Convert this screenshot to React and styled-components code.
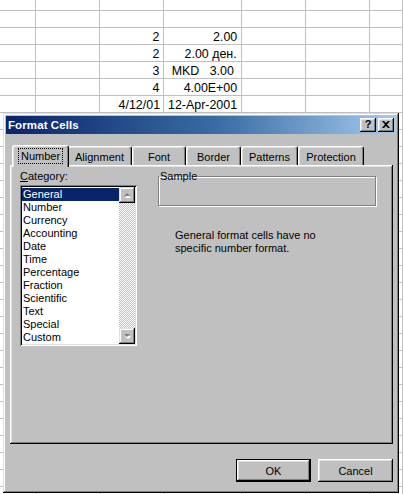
import React from "react";
import styled, { createGlobalStyle, css } from "styled-components";

const Global = createGlobalStyle`
  html, body { margin: 0; padding: 0; background: #fff; overflow: hidden; }
  body { width: 403px; height: 494px; font-family: "Liberation Sans", Arial, sans-serif; }
  * { box-sizing: border-box; }
`;

const Page = styled.div`
  position: relative;
  width: 403px;
  height: 494px;
  overflow: hidden;
`;

const Sheet = styled.div`
  display: grid;
  grid-template-columns: 36px 64px 64px 78px 64px 64px 1fr;
  grid-template-rows: 11px;
  grid-auto-rows: 17px;
`;

const Cell = styled.div`
  border-right: 1px solid #c0c0c0;
  border-bottom: 1px solid #c0c0c0;
  display: flex;
  align-items: flex-end;
  justify-content: flex-end;
  padding-right: ${(p) => p.$pr ?? 3}px;
  overflow: visible;
  white-space: pre;
`;

const CellText = styled.span`
  display: inline-block;
  font-family: "Liberation Sans", Arial, sans-serif;
  font-size: 13.5px;
  line-height: 15px;
  color: #000;
  transform: scaleX(0.92);
  transform-origin: right bottom;
`;

const Dialog = styled.div`
  position: absolute;
  left: 3px;
  top: 113px;
  width: 396px;
  height: 380px;
  background: #c0c0c0;
  padding: 3px;
  box-shadow: inset -1px -1px #000, inset 1px 1px #dfdfdf, inset -2px -2px #808080, inset 2px 2px #fff;
  display: flex;
  flex-direction: column;
  font-family: "Liberation Sans", Arial, sans-serif;
  font-size: 11px;
  color: #000;
`;

const TitleBar = styled.div`
  height: 18px;
  background: linear-gradient(to right, #0a246a, #3a6ea5 55%, #a6caf0);
  display: flex;
  align-items: center;
  padding: 0 2px 0 2px;
  flex: none;
`;

const Title = styled.div`
  flex: 1;
  color: #fff;
  font-weight: bold;
  font-size: 11.5px;
  letter-spacing: 0.1px;
`;

const CapButton = styled.div`
  width: 16px;
  height: 14px;
  background: #c0c0c0;
  box-shadow: inset -1px -1px #000, inset 1px 1px #fff, inset -2px -2px #808080, inset 2px 2px #dfdfdf;
  display: flex;
  align-items: center;
  justify-content: center;
  margin-left: ${(p) => p.$ml || 0}px;
  font-weight: bold;
  font-size: 11px;
  line-height: 11px;
  padding-bottom: 1px;
`;

const Body = styled.div`
  flex: 1;
  display: flex;
  flex-direction: column;
  padding: 10px 0 0 4px;
`;

const TabStrip = styled.div`
  display: flex;
  align-items: flex-end;
  height: 21px;
  padding-left: 4px;
  position: relative;
  z-index: 1;
`;

const Tab = styled.div`
  width: ${(p) => p.$w}px;
  height: 19px;
  background: #c0c0c0;
  border-top: 1px solid #fff;
  border-left: 1px solid #fff;
  border-right: 1px solid #000;
  border-radius: 3px 3px 0 0;
  box-shadow: inset -1px 0 #808080, inset 1px 1px #dfdfdf;
  display: flex;
  align-items: center;
  justify-content: center;
  padding-top: 1px;
  ${(p) =>
    p.$active &&
    css`
      height: 22px;
      margin: 0 -2px -2px;
      width: ${p.$w + 3}px;
      padding-bottom: 3px;
      position: relative;
      z-index: 2;
    `}
`;

const Focus = styled.span`
  outline: 1px dotted #000;
  outline-offset: 0px;
  padding: 1px 2px;
`;

const Panel = styled.div`
  width: 383px;
  height: 279px;
  background: #c0c0c0;
  box-shadow: inset -1px -1px #000, inset 1px 1px #fff, inset -2px -2px #808080, inset 2px 2px #dfdfdf;
  display: flex;
  padding: 5px 0 0 10px;
  gap: 21px;
`;

const LeftCol = styled.div`
  display: flex;
  flex-direction: column;
  width: 117px;
`;

const Label = styled.div`
  line-height: 13px;
  margin-bottom: 2px;
  u { text-decoration: underline; text-underline-offset: 1px; }
`;

const ListBox = styled.div`
  width: 117px;
  height: 161px;
  background: #fff;
  padding: 2px;
  box-shadow: inset 1px 1px #808080, inset -1px -1px #fff, inset 2px 2px #000, inset -2px -2px #dfdfdf;
  display: flex;
`;

const Items = styled.div`
  flex: 1;
  padding-top: 1px;
  overflow: hidden;
`;

const Item = styled.div`
  height: 13px;
  line-height: 13px;
  padding-left: 1px;
  white-space: nowrap;
  ${(p) =>
    p.$sel &&
    css`
      background: #0a246a;
      color: #fff;
    `}
`;

const ScrollBar = styled.div`
  width: 16px;
  display: flex;
  flex-direction: column;
  background: repeating-conic-gradient(#c0c0c0 0 25%, #fff 0 50%) 0 0 / 2px 2px;
`;

const Track = styled.div`
  flex: 1;
`;

const ArrowBtn = styled.div`
  width: 16px;
  height: 16px;
  background: #c0c0c0;
  box-shadow: inset -1px -1px #000, inset 1px 1px #dfdfdf, inset -2px -2px #808080, inset 2px 2px #fff;
  display: flex;
  align-items: center;
  justify-content: center;
`;

const RightCol = styled.div`
  display: flex;
  flex-direction: column;
  width: 218px;
`;

const Group = styled.fieldset`
  margin: 0;
  padding: 0;
  min-width: 0;
  width: 218px;
  height: 36px;
  border: 1px solid #808080;
  box-shadow: inset 1px 1px #fff, 1px 1px #fff;
  legend {
    padding: 0 1px;
    margin-left: 0;
    line-height: 13px;
    font-size: 11px;
  }
`;

const Desc = styled.div`
  margin: 23px 0 0 17px;
  line-height: 13px;
`;

const Footer = styled.div`
  display: flex;
  justify-content: flex-end;
  gap: 7px;
  padding: 15px 3px 0 0;
`;

const Btn = styled.div`
  width: 75px;
  height: 23px;
  display: flex;
  align-items: center;
  justify-content: center;
  background: #c0c0c0;
  padding-top: 1px;
  box-shadow: ${(p) =>
    p.$default
      ? "inset 0 0 0 1px #000, inset -2px -2px #000, inset 2px 2px #fff, inset -3px -3px #808080, inset 3px 3px #dfdfdf"
      : "inset -1px -1px #000, inset 1px 1px #fff, inset -2px -2px #808080, inset 2px 2px #dfdfdf"};
`;

const UpArrow = () => (
  <svg width="8" height="5" viewBox="0 0 8 5">
    <path d="M4 1 L7 4 H1 Z" fill="#fff" transform="translate(1 1)" />
    <path d="M4 0 L7 3 H1 Z" fill="#808080" />
  </svg>
);

const DownArrow = () => (
  <svg width="8" height="5" viewBox="0 0 8 5">
    <path d="M1 1 H7 L4 4 Z" fill="#fff" transform="translate(1 1)" />
    <path d="M1 0 H7 L4 3 Z" fill="#808080" />
  </svg>
);

const CloseGlyph = () => (
  <svg width="8" height="7" viewBox="0 0 8 7">
    <path d="M0 0h2l2 2 2-2h2L5 3.5 8 7H6L4 5 2 7H0l3-3.5z" fill="#000" />
  </svg>
);

const rows = [
  ["", "", "", "", "", "", ""],
  ["", "", "", "", "", "", ""],
  ["", "", "2", "2.00", "", "", ""],
  ["", "", "2", "2.00 ден.", "", "", ""],
  ["", "", "3", "MKD   3.00 ", "", "", ""],
  ["", "", "4", "4.00E+00", "", "", ""],
  ["", "", "4/12/01", "12-Apr-2001", "", "", ""],
];
while (rows.length < 32) rows.push(["", "", "", "", "", "", ""]);

const tabs = [
  ["Number", 54],
  ["Alignment", 65],
  ["Font", 54],
  ["Border", 55],
  ["Patterns", 57],
  ["Protection", 66],
];

const categories = [
  "General",
  "Number",
  "Currency",
  "Accounting",
  "Date",
  "Time",
  "Percentage",
  "Fraction",
  "Scientific",
  "Text",
  "Special",
  "Custom",
];

export default function App() {
  return (
    <Page>
      <Global />
      <Sheet>
        {rows.map((r, i) =>
          r.map((c, j) => (
            <Cell key={`${i}-${j}`} $pr={j === 3 ? 4 : 3}>
              {c && <CellText>{c}</CellText>}
            </Cell>
          ))
        )}
      </Sheet>
      <Dialog>
        <TitleBar>
          <Title>Format Cells</Title>
          <CapButton>?</CapButton>
          <CapButton $ml={2}>
            <CloseGlyph />
          </CapButton>
        </TitleBar>
        <Body>
          <TabStrip>
            {tabs.map(([t, w], i) => (
              <Tab key={t} $w={w} $active={i === 0}>
                {i === 0 ? <Focus>{t}</Focus> : t}
              </Tab>
            ))}
          </TabStrip>
          <Panel>
            <LeftCol>
              <Label>
                <u>C</u>ategory:
              </Label>
              <ListBox>
                <Items>
                  {categories.map((c, i) => (
                    <Item key={c} $sel={i === 0}>
                      {c}
                    </Item>
                  ))}
                </Items>
                <ScrollBar>
                  <ArrowBtn>
                    <UpArrow />
                  </ArrowBtn>
                  <Track />
                  <ArrowBtn>
                    <DownArrow />
                  </ArrowBtn>
                </ScrollBar>
              </ListBox>
            </LeftCol>
            <RightCol>
              <Group>
                <legend>Sample</legend>
              </Group>
              <Desc>
                General format cells have no
                <br />
                specific number format.
              </Desc>
            </RightCol>
          </Panel>
          <Footer>
            <Btn $default>OK</Btn>
            <Btn>Cancel</Btn>
          </Footer>
        </Body>
      </Dialog>
    </Page>
  );
}
